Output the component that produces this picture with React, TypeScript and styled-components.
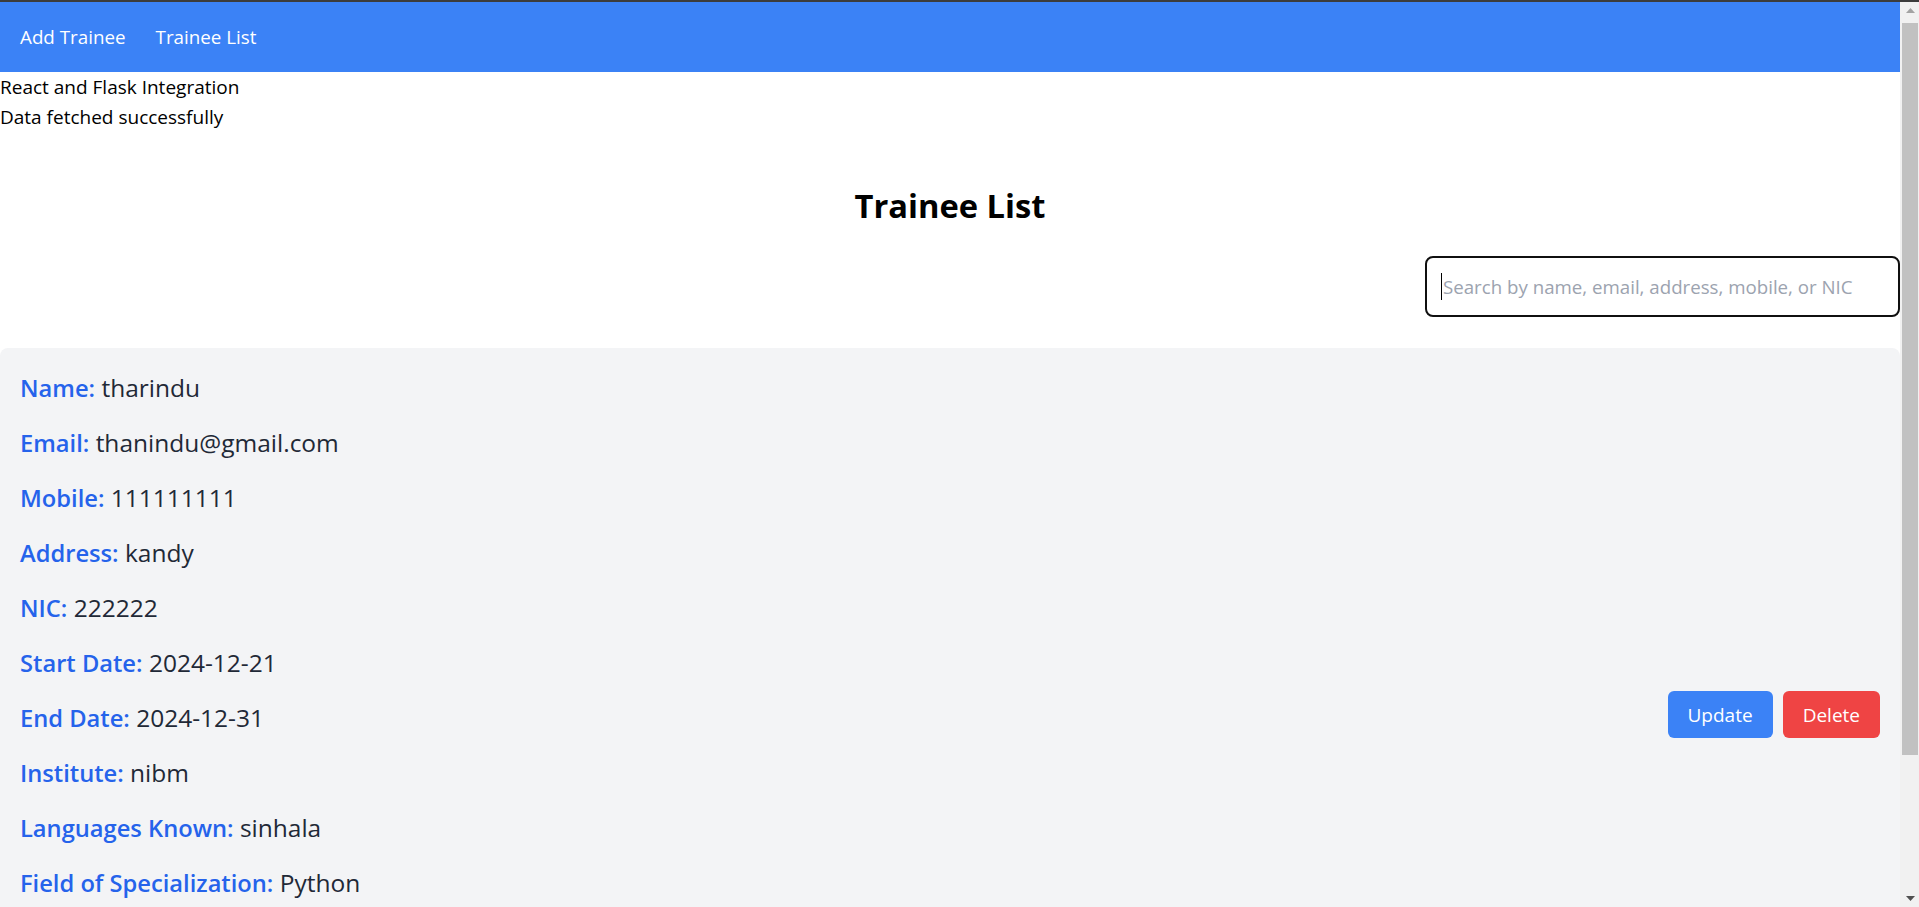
import styled, { createGlobalStyle } from 'styled-components';

const GlobalStyle = createGlobalStyle`
	html, body {
		margin: 0;
		padding: 0;
		background: #ffffff;
		overflow: hidden;
	}
	body {
		font-family: 'Open Sans', 'Noto Sans', sans-serif;
		font-size: 19px;
		line-height: 30px;
		color: #000;
		border-top: 2px solid #3c3c3c;
	}
	* {
		box-sizing: border-box;
	}
`;

const trainees = [
	{
		name: 'tharindu',
		email: 'thanindu@gmail.com',
		mobile: '111111111',
		address: 'kandy',
		nic: '222222',
		startDate: '2024-12-21',
		endDate: '2024-12-31',
		institute: 'nibm',
		languages: 'sinhala',
		field: 'Python',
		team: 'Backend',
		supervisor: 'kasun',
		status: 'Active',
	},
];

function App() {
	return (
		<Window>
			<GlobalStyle />
			<Viewport>
				<NavBar>
					<NavLink href='#'>Add Trainee</NavLink>
					<NavLink href='#'>Trainee List</NavLink>
				</NavBar>
				<div>React and Flask Integration</div>
				<div>Data fetched successfully</div>

				<Title>Trainee List</Title>
				<SearchRow>
					<SearchBox>
						<SearchInput placeholder='Search by name, email, address, mobile, or NIC' />
						<Caret />
					</SearchBox>
				</SearchRow>

				{trainees.map((t) => (
					<Card key={t.nic}>
						<Fields>
							<Field>
								<Label>Name:</Label> {t.name}
							</Field>
							<Field>
								<Label>Email:</Label> {t.email}
							</Field>
							<Field>
								<Label>Mobile:</Label> {t.mobile}
							</Field>
							<Field>
								<Label>Address:</Label> {t.address}
							</Field>
							<Field>
								<Label>NIC:</Label> {t.nic}
							</Field>
							<Field>
								<Label>Start Date:</Label> {t.startDate}
							</Field>
							<Field>
								<Label>End Date:</Label> {t.endDate}
							</Field>
							<Field>
								<Label>Institute:</Label> {t.institute}
							</Field>
							<Field>
								<Label>Languages Known:</Label> {t.languages}
							</Field>
							<Field>
								<Label>Field of Specialization:</Label> {t.field}
							</Field>
							<Field>
								<Label>Team:</Label> {t.team}
							</Field>
							<Field>
								<Label>Supervisor:</Label> {t.supervisor}
							</Field>
							<Field>
								<Label>Status:</Label> {t.status}
							</Field>
						</Fields>
						<Actions>
							<ActionButton $color='#3b82f6'>Update</ActionButton>
							<ActionButton $color='#ef4444'>Delete</ActionButton>
						</Actions>
					</Card>
				))}
			</Viewport>

			{/* browser scrollbar */}
			<ScrollBar>
				<ScrollArrow>
					<svg width='9' height='5' viewBox='0 0 9 5'>
						<path d='M0 5 L4.5 0 L9 5 Z' fill='#a3a3a3' />
					</svg>
				</ScrollArrow>
				<ScrollTrack>
					<ScrollThumb />
				</ScrollTrack>
				<ScrollArrow>
					<svg width='9' height='5' viewBox='0 0 9 5'>
						<path d='M0 0 L9 0 L4.5 5 Z' fill='#505050' />
					</svg>
				</ScrollArrow>
			</ScrollBar>
		</Window>
	);
}

const Window = styled.div`
	display: flex;
	height: 905px;
`;

const Viewport = styled.div`
	flex: 1;
	min-width: 0;
	height: 905px;
	overflow: hidden;
`;

const ScrollBar = styled.div`
	display: flex;
	flex-direction: column;
	width: 19px;
	height: 905px;
	background: #f1f1f1;
`;

const ScrollArrow = styled.div`
	display: flex;
	align-items: center;
	justify-content: center;
	height: 17px;
	padding-left: 1px;
`;

const ScrollTrack = styled.div`
	flex: 1;
	padding: 4px 1px 0 2px;
`;

const ScrollThumb = styled.div`
	height: 732px;
	background: #c1c1c1;
`;

const NavBar = styled.nav`
	display: flex;
	align-items: center;
	gap: 30px;
	height: 70px;
	padding: 0 20px;
	background: #3b82f6;
`;

const NavLink = styled.a`
	color: #ffffff;
	text-decoration: none;
	font-size: 18.8px;
	line-height: 30px;
`;

const Title = styled.h2`
	margin: 54px 0 30px;
	text-align: center;
	font-size: 32.7px;
	line-height: 40px;
	font-weight: 700;
`;

const SearchRow = styled.div`
	display: flex;
	justify-content: flex-end;
	margin-bottom: 31px;
`;

const SearchBox = styled.div`
	position: relative;
	width: 475px;
`;

const SearchInput = styled.input`
	width: 100%;
	height: 61px;
	padding: 0 16px;
	border: 2px solid #101010;
	border-radius: 8px;
	font-family: 'Open Sans', 'Noto Sans', sans-serif;
	font-size: 18.7px;
	color: #111827;
	outline: none;
	&::placeholder {
		color: #9ca3af;
	}
`;

const Caret = styled.span`
	position: absolute;
	left: 16px;
	top: 17px;
	width: 1px;
	height: 27px;
	background: #000;
`;

const Card = styled.div`
	display: flex;
	justify-content: space-between;
	align-items: center;
	padding: 22px 20px 16px;
	background: #f3f4f6;
	border-radius: 8px;
`;

const Fields = styled.div`
	display: flex;
	flex-direction: column;
	gap: 20px;
`;

const Field = styled.p`
	margin: 0;
	height: 35px;
	font-size: 24.5px;
	line-height: 35px;
	color: #1f2937;
	white-space: nowrap;
`;

const Label = styled.span`
	color: #2563eb;
	font-weight: 600;
	font-size: 23.7px;
	line-height: 1;
`;

const Actions = styled.div`
	display: flex;
	gap: 10px;
	margin-top: -6px;
`;

const ActionButton = styled.button<{ $color: string }>`
	height: 47px;
	padding: 0 20px;
	border: none;
	border-radius: 6px;
	background: ${(p) => p.$color};
	color: #ffffff;
	font-family: 'Open Sans', 'Noto Sans', sans-serif;
	font-size: 19px;
	cursor: pointer;
`;

export default App;
